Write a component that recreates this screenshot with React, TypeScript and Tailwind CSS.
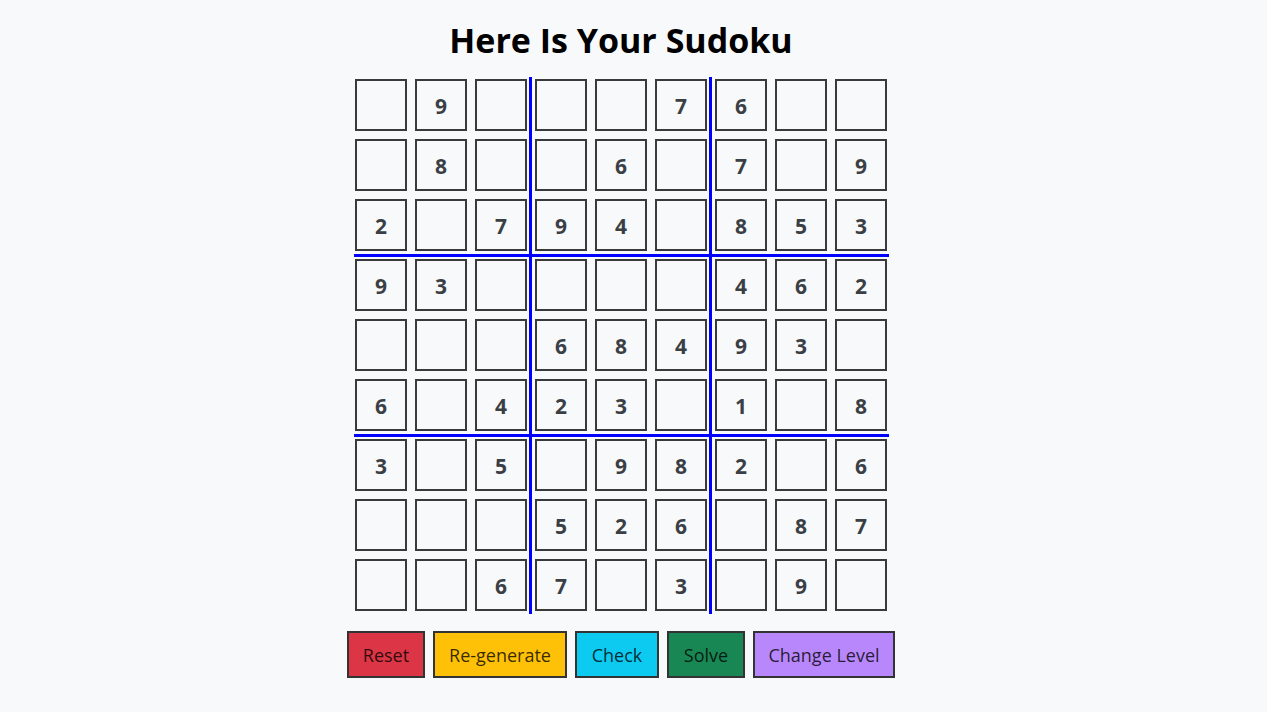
const GRID: (number | null)[][] = [
  [null, 9, null, null, null, 7, 6, null, null],
  [null, 8, null, null, 6, null, 7, null, 9],
  [2, null, 7, 9, 4, null, 8, 5, 3],
  [9, 3, null, null, null, null, 4, 6, 2],
  [null, null, null, 6, 8, 4, 9, 3, null],
  [6, null, 4, 2, 3, null, 1, null, 8],
  [3, null, 5, null, 9, 8, 2, null, 6],
  [null, null, null, 5, 2, 6, null, 8, 7],
  [null, null, 6, 7, null, 3, null, 9, null],
];

const BUTTONS = [
  { label: 'Reset', cls: 'w-[78px] bg-[#dc3545]' },
  { label: 'Re-generate', cls: 'w-[134px] bg-[#ffc107]' },
  { label: 'Check', cls: 'w-[84px] bg-[#0dcaf0]' },
  { label: 'Solve', cls: 'w-[78px] bg-[#198754]' },
  { label: 'Change Level', cls: 'w-[142px] bg-[#b987fc]' },
];

export default function App() {
  return (
    <div className="min-h-[712px] w-full bg-[#f8f9fa] font-['Open_Sans',sans-serif] text-[#212529]">
      <div className="flex flex-col items-center pr-[25px]">
        <h1 className="mt-[20px] mb-[19px] text-[34px] font-bold leading-[40px] text-black">
          Here Is Your Sudoku
        </h1>

        <div className="relative">
          <div className="grid grid-cols-[repeat(9,52px)] gap-2">
            {GRID.flat().map((v, i) => (
              <div
                key={i}
                className="flex h-[52px] w-[52px] items-center justify-center border-2 border-[#3a3a3a] pt-[3px] text-[21px] font-bold text-[#3a3f45]"
              >
                {v ?? ''}
              </div>
            ))}
          </div>
          {/* box separators */}
          <div className="pointer-events-none absolute -top-[2px] -bottom-[3px] left-[174px] w-[3px] bg-[#0000ff]" />
          <div className="pointer-events-none absolute -top-[2px] -bottom-[3px] left-[354px] w-[3px] bg-[#0000ff]" />
          <div className="pointer-events-none absolute -left-[1px] -right-[2px] top-[175px] h-[3px] bg-[#0000ff]" />
          <div className="pointer-events-none absolute -left-[1px] -right-[2px] top-[355px] h-[3px] bg-[#0000ff]" />
        </div>

        <div className="mt-5 flex gap-2">
          {BUTTONS.map((b) => (
            <button
              key={b.label}
              className={`h-[47px] border-2 border-[#333] text-center text-[18px] leading-none text-black/80 ${b.cls}`}
            >
              {b.label}
            </button>
          ))}
        </div>
      </div>
    </div>
  );
}
